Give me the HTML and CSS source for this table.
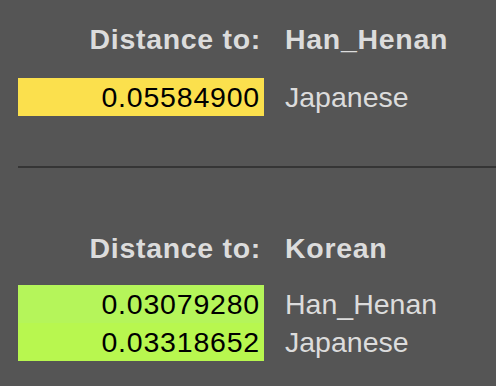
FILE: index.html
```html
<!DOCTYPE html>
<html lang="en">
<head>
  <meta charset="UTF-8" />
  <title>Distances</title>
  <link rel="stylesheet" href="styles.css">
</head>
<body>

  <!-- distanze da Han_Henan -->
  <div class="block first">
    <div class="dist-head">
      <span class="dist-title">Distance to:</span>
      <span class="dist-target">Han_Henan</span>
    </div>
    <div class="dist-rows">
      <div class="dist-row yellow">
        <span class="dist-val">0.05584900</span>
        <span class="dist-name">Japanese</span>
      </div>
    </div>
  </div>

  <hr class="sep">

  <!-- distanze da Korean -->
  <div class="block second">
    <div class="dist-head">
      <span class="dist-title">Distance to:</span>
      <span class="dist-target">Korean</span>
    </div>
    <div class="dist-rows">
      <div class="dist-row green">
        <span class="dist-val">0.03079280</span>
        <span class="dist-name">Han_Henan</span>
      </div>
      <div class="dist-row green alt">
        <span class="dist-val">0.03318652</span>
        <span class="dist-name">Japanese</span>
      </div>
    </div>
  </div>

</body>
</html>
```

FILE: styles.css
```css
/* Reset e font base */
* {
  margin: 0;
  padding: 0;
  box-sizing: border-box;
}
body {
  background-color: #555555;
  font-family: "Liberation Sans", Arial, sans-serif;
  font-size: 28.5px;
  color: #dcdcdc;
  padding-left: 18px;
  overflow: hidden;
}
/* Blocchi */
.block.first {
  padding-top: 20px;
}
.block.second {
  padding-top: 61px;
}
.dist-head,
.dist-row {
  display: grid;
  grid-template-columns: 246px auto;
  column-gap: 21px;
  height: 38px;
  line-height: 38px;
  white-space: nowrap;
}
.dist-head {
  font-weight: bold;
  letter-spacing: 0.7px;
}
.dist-title {
  text-align: right;
  padding-right: 3px;
}
.first .dist-rows {
  margin-top: 20px;
}
.second .dist-rows {
  margin-top: 18px;
}
.dist-val {
  text-align: right;
  padding-right: 4px;
  color: #000;
  letter-spacing: 0.8px;
}
.dist-name {
  color: #dcdcdc;
}
.yellow .dist-val {
  background-color: #fbe04d;
}
.green .dist-val {
  background-color: #b5f55a;
}
.green.alt .dist-val {
  background-color: #b8f74f;
}
/* Separatore */
.sep {
  border: none;
  height: 2px;
  background-color: #353535;
  margin-top: 50px;
}
```
